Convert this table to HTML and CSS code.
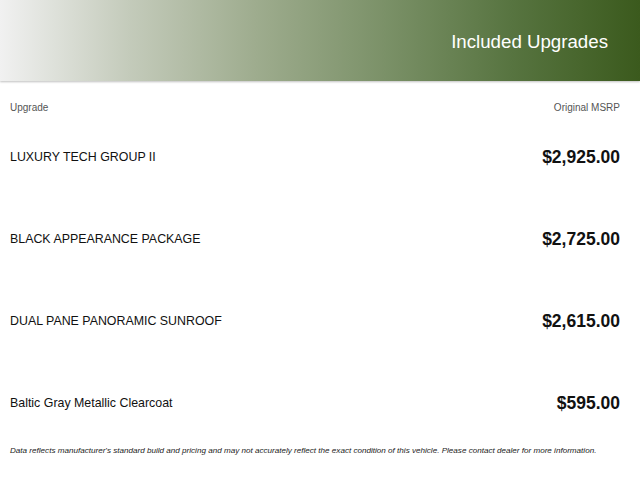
FILE: index.html
```html
<!DOCTYPE html>
<html>
<head>
<meta charset="utf-8">
<link rel="stylesheet" href="styles.css">
</head>
<body>
<div class="banner">
  <h1 class="banner-title">Included Upgrades</h1>
</div>
<div class="table">
  <div class="col-head">
    <span>Upgrade</span>
    <span>Original MSRP</span>
  </div>
  <div class="row">
    <span class="name">LUXURY TECH GROUP II</span>
    <span class="price">$2,925.00</span>
  </div>
  <div class="row">
    <span class="name">BLACK APPEARANCE PACKAGE</span>
    <span class="price">$2,725.00</span>
  </div>
  <div class="row">
    <span class="name">DUAL PANE PANORAMIC SUNROOF</span>
    <span class="price">$2,615.00</span>
  </div>
  <div class="row">
    <span class="name">Baltic Gray Metallic Clearcoat</span>
    <span class="price">$595.00</span>
  </div>
  <p class="disclaimer">Data reflects manufacturer's standard build and pricing and may not accurately reflect the exact condition of this vehicle. Please contact dealer for more information.</p>
</div>
</body>
</html>
```
FILE: styles.css
```css
html, body {
  margin: 0;
  padding: 0;
  background: #fff;
  font-family: "Liberation Sans", Arial, sans-serif;
}
.banner {
  height: 81px;
  display: flex;
  align-items: center;
  justify-content: flex-end;
  padding-right: 32px;
  background: linear-gradient(to right, #f1f1f1 0%, #c4cbbb 20%, #9eac8e 40%, #7b9168 60%, #577440 80%, #3b5a1d 100%);
  box-shadow: 0 1px 2px rgba(0, 0, 0, 0.25);
}
.banner-title {
  margin: 2px 0 0 0;
  font-weight: normal;
  font-size: 18.7px;
  color: #fff;
}
.table {
  padding: 0 20px 0 10px;
}
.col-head {
  display: flex;
  justify-content: space-between;
  font-size: 10px;
  color: #555;
  padding-top: 21px;
  height: 14px;
}
.row {
  display: flex;
  justify-content: space-between;
  align-items: center;
  height: 82px;
}
.name {
  font-size: 12.4px;
  color: #111;
}
.price {
  font-size: 17.5px;
  font-weight: bold;
  color: #111;
}
.disclaimer {
  margin: 0;
  padding-top: 2px;
  font-size: 8.1px;
  font-style: italic;
  color: #222;
}
```
